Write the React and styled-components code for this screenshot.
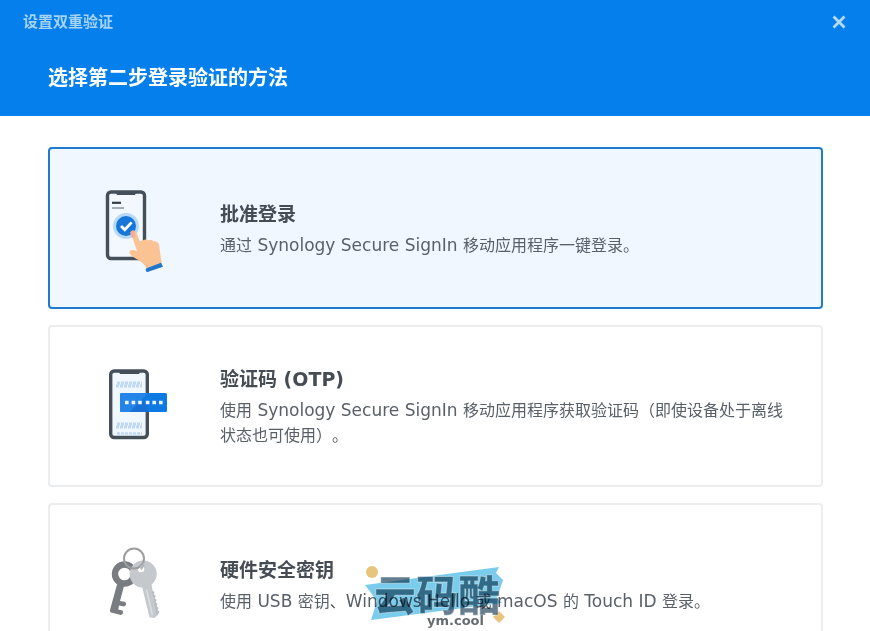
import React, { useState } from "react";
import styled, { createGlobalStyle, css } from "styled-components";

const GlobalStyle = createGlobalStyle`
  * {
    box-sizing: border-box;
  }

  body {
    margin: 0;
    background: #fff;
    font-family: "DejaVu Sans", "Noto Sans CJK SC", sans-serif;
  }

  h1, h2, p {
    margin: 0;
  }
`;

const PhoneApprove = () => (
  <svg width="90" height="96" viewBox="0 0 90 96" aria-hidden="true">
    <rect x="17.5" y="12" width="37" height="66.5" rx="3.5" fill="#f3f8ff" stroke="#454f5a" strokeWidth="3.4" />
    <path d="M25 11h22l-2 4H27z" fill="#454f5a" />
    <path d="M22 22.8h9" stroke="#343c46" strokeWidth="2.2" />
    <path d="M22 28h12" stroke="#9ba5b0" strokeWidth="1.8" />
    <circle cx="36" cy="46" r="13" fill="#b5d9fa" />
    <circle cx="36" cy="46" r="10" fill="#1677d8" />
    <path d="M31 46l3.8 3.8 6.8-7.4" fill="none" stroke="#fff" strokeWidth="2.8" />
    <path
      d="M40.5 52c1.6-2.4 5-2 6 .8l3.2 8.4 3.4-1c2-1.2 4-1 5.4.2 2-.8 4-.2 5 1 2.6-.6 5 1 5.6 3.8.8 4 1 7.8 1.6 11.8.5 2.5.6 4.5 1.2 6.5L57 89.5c-2-5-5.5-7.5-10.5-10.5-3.500-2-6.500-4-7-6.500-.3-2 2-3 4.500-2.200l3 .7z"
      fill="#fbc394"
    />
    <path d="M56.5 88.2L71 82.8l2 4L57.5 92c-1.5.3-2.5-3-1-3.8z" fill="#2377ca" />
    <path d="M40.5 52c-.8 1.4.8 5 2 6l3-1-1-6c-1.3-.6-3 0-4 1z" fill="#f5ad98" />
  </svg>
);

const codeRows = [27, 68];

const PhoneCode = () => (
  <svg width="90" height="96" viewBox="0 0 90 96" aria-hidden="true">
    <rect x="20.7" y="13" width="36.6" height="66.5" rx="3.5" fill="#f1f7ff" stroke="#454f5a" strokeWidth="3.4" />
    <path d="M28 12h23l-2 4H30z" fill="#454f5a" />
    {codeRows.map((y) => (
      <path
        key={y}
        d={`M27 ${y - 2}h25M26 ${y + 1}h26`}
        stroke="#c0d8f4"
        strokeWidth="2.8"
        strokeDasharray="3 1"
      />
    ))}
    <path d="M27 75.500h25" stroke="#c0d8f4" strokeWidth="2.4" strokeDasharray="3 1" />
    <rect x="30" y="35" width="47" height="19" rx="1.5" fill="#0d79e2" />
    <path d="M31.5 35H58L40 54h-8.5q-1.5 0-1.5-1.5v-16q0-1.5 1.5-1.5z" fill="#2584e8" />
    <path d="M58 44v10H40l9-10z" fill="#1670d3" />
    <path
      d="M35 44.5h3.6m3 0h3.6m3 0h3.6m4 0h3.6m3 0h3.6m3 0h3.6"
      stroke="#edf6ff"
      strokeWidth="3.6"
    />
  </svg>
);

const Keys = () => (
  <svg width="90" height="96" viewBox="0 0 90 96" aria-hidden="true">
    <circle cx="34.5" cy="38" r="9.5" fill="none" stroke="#797c80" strokeWidth="6.4" />
    <path d="M27 48.5l7 1.5-4 15 5.5 1q1.5 3.5-1.5 4.5l-5-1-.8 4 4.3 1q1.5 3.5-1.5 4.5l-10-2.5q-1.5-.7-1-2.5z" fill="#797c80" />
    <path
      d="M52 24.5a13.5 13.5 0 0 1 9.5 24.2L67.5 76.5q.4 3.5-3.5 5.5l-4.5-.8L52.3 51.8A13.7 13.7 0 0 1 52 24.5z"
      fill="#c5c8cc"
    />
    <path d="M62 55l2.5.8-.6 2.7 2 1.5-1.2 2 2 2-1.2 2 2 2-1 2 2 2-1 2 2 2-2.5 4z" fill="#b9bdc1" />
    <path d="M56.5 53.5l6 26" stroke="#dadde0" strokeWidth="1.6" />
    <circle cx="51" cy="33" r="3.3" fill="#fff" />
    <circle cx="44" cy="22.5" r="10" fill="none" stroke="#9c9d9f" strokeWidth="2" />
    <path d="M49 31q3-2 4.5-5l1 4-3 4z" fill="#b3b5b8" />
  </svg>
);

const methods = [
  {
    id: "approve",
    title: "批准登录",
    text: "通过 Synology Secure SignIn 移动应用程序一键登录。",
    Icon: PhoneApprove,
  },
  {
    id: "otp",
    title: "验证码 (OTP)",
    text: "使用 Synology Secure SignIn 移动应用程序获取验证码（即使设备处于离线状态也可使用）。",
    Icon: PhoneCode,
  },
  {
    id: "key",
    title: "硬件安全密钥",
    text: "使用 USB 密钥、Windows Hello 或 macOS 的 Touch ID 登录。",
    Icon: Keys,
  },
];

// latin runs are set one size up from the Chinese text
const withLatin = (text) =>
  text
    .split(/([ -~]+)/)
    .map((part, i) => (i % 2 ? <Latin key={i}>{part}</Latin> : part));

export default function App() {
  const [selected, setSelected] = useState("approve");

  return (
    <Dialog>
      <GlobalStyle />
      <Header>
        <TitleBar>
          <WindowTitle>设置双重验证</WindowTitle>
          <CloseButton type="button" aria-label="关闭">
            <svg width="14" height="14" viewBox="0 0 14 14" aria-hidden="true">
              <path d="M1.5 1.5l11 11m0-11l-11 11" stroke="currentColor" strokeWidth="2.8" />
            </svg>
          </CloseButton>
        </TitleBar>
        <Heading>选择第二步登录验证的方法</Heading>
      </Header>
      <MethodList>
        {methods.map(({ id, title, text, Icon }) => (
          <MethodCard
            key={id}
            type="button"
            $selected={selected === id}
            aria-pressed={selected === id}
            onClick={() => setSelected(id)}
          >
            <IconCell>
              <Icon />
            </IconCell>
            <MethodBody>
              <MethodTitle>{title}</MethodTitle>
              <MethodText>{withLatin(text)}</MethodText>
            </MethodBody>
          </MethodCard>
        ))}
      </MethodList>
      <Watermark>
        <svg width="144" height="68" viewBox="0 0 144 68" aria-hidden="true">
          <path d="M2 22L136 4l-3 6 7 7-6 18 5 5L8 57l6-19z" fill="#7accec" />
          <circle cx="9" cy="9" r="6" fill="#e8c47d" />
          <path d="M136 48l6 6-6 6-6-6z" fill="#e8c47d" />
        </svg>
        <WatermarkName>云码酷</WatermarkName>
        <WatermarkSite>ym.cool</WatermarkSite>
      </Watermark>
    </Dialog>
  );
}

const Dialog = styled.main`
  position: relative;
  display: flex;
  flex-direction: column;
  height: 100vh;
  overflow: hidden;
  background: #fff;
`;

const Header = styled.header`
  flex: none;
  padding-bottom: 16px;
  background: #057feb;
`;

const TitleBar = styled.div`
  display: flex;
  align-items: center;
  justify-content: space-between;
  height: 44px;
  padding: 0 20px 0 23px;
`;

const WindowTitle = styled.p`
  color: #a5d3fa;
  font-size: 15px;
  font-weight: 700;
  line-height: 20px;
`;

const CloseButton = styled.button`
  display: flex;
  padding: 4px;
  border: 0;
  background: none;
  color: #b3dcfb;
  cursor: pointer;
`;

const Heading = styled.h1`
  padding: 18px 48px 6px;
  color: #fff;
  font-size: 20px;
  font-weight: 700;
  line-height: 32px;
`;

const MethodList = styled.div`
  display: flex;
  flex: 1;
  flex-direction: column;
  gap: 16px;
  min-height: 0;
  padding: 31px 47px 31px 48px;
  overflow-y: auto;
  scrollbar-width: none;
`;

const MethodCard = styled.button`
  display: flex;
  flex: none;
  align-items: center;
  min-height: 162px;
  padding: 0 24px 0 0;
  border: 2px solid #ebedef;
  border-radius: 4px;
  background: #fff;
  font-family: inherit;
  text-align: left;
  cursor: pointer;

  ${({ $selected }) =>
    $selected &&
    css`
      border-color: #1f7bcd;
      background: #f0f7ff;
    `}
`;

const IconCell = styled.span`
  display: flex;
  flex: none;
  justify-content: center;
  width: 170px;
`;

const MethodBody = styled.span`
  display: flex;
  flex-direction: column;
  gap: 4px;
`;

const MethodTitle = styled.strong`
  color: #454c54;
  font-size: 19px;
  line-height: 30px;
`;

const MethodText = styled.span`
  color: #5a6068;
  font-size: 16px;
  line-height: 25px;
  text-spacing-trim: space-all;
`;

const Latin = styled.span`
  font-size: 17px;
  line-height: 24px;
`;

const Watermark = styled.div`
  position: absolute;
  bottom: 0;
  left: 50%;
  width: 144px;
  height: 68px;
  transform: translateX(-50%);
  pointer-events: none;
  mix-blend-mode: multiply;
`;

const WatermarkName = styled.span`
  position: absolute;
  top: 8px;
  left: 11px;
  color: rgba(0, 40, 68, 0.6);
  font-family: "Noto Sans CJK SC", sans-serif;
  font-size: 42px;
  font-weight: 900;
  line-height: 44px;
  white-space: nowrap;
  -webkit-text-stroke: 1px rgba(255, 255, 255, 0.4);
`;

const WatermarkSite = styled.span`
  position: absolute;
  bottom: 2px;
  left: 64px;
  color: #666b70;
  font-size: 13px;
  font-weight: 700;
  line-height: 16px;
`;
